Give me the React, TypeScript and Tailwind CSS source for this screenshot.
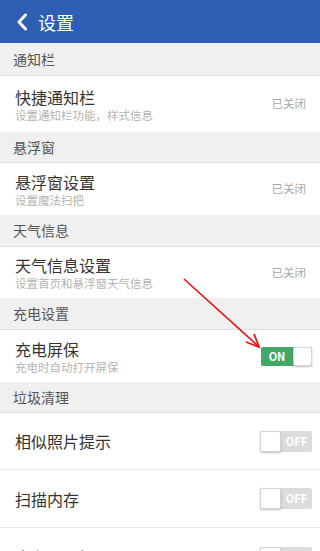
import React from "react";

type Row = {
  title: string;
  subtitle?: string;
  status?: string;
  toggle?: "on" | "off";
  h: string;
};

type Section = { label: string; h: string; rows: Row[] };

const SECTIONS: Section[] = [
  {
    label: "通知栏",
    h: "h-[33px]",
    rows: [
      { title: "快捷通知栏", subtitle: "设置通知栏功能，样式信息", status: "已关闭", h: "h-[56px]" },
    ],
  },
  {
    label: "悬浮窗",
    h: "h-[31px]",
    rows: [{ title: "悬浮窗设置", subtitle: "设置魔法扫把", status: "已关闭", h: "h-[52px]" }],
  },
  {
    label: "天气信息",
    h: "h-[32px]",
    rows: [
      { title: "天气信息设置", subtitle: "设置首页和悬浮窗天气信息", status: "已关闭", h: "h-[51px]" },
    ],
  },
  {
    label: "充电设置",
    h: "h-[32px]",
    rows: [{ title: "充电屏保", subtitle: "充电时自动打开屏保", toggle: "on", h: "h-[52px]" }],
  },
  {
    label: "垃圾清理",
    h: "h-[31px]",
    rows: [
      { title: "相似照片提示", toggle: "off", h: "h-[57px]" },
      { title: "扫描内存", toggle: "off", h: "h-[58px]" },
      { title: "内存不足提醒", toggle: "off", h: "h-[58px]" },
    ],
  },
];

function Toggle({ on }: { on: boolean }) {
  if (on) {
    return (
      <div className="flex h-[19px] w-[51px] rounded-[2px] bg-[#43a865]">
        <div className="flex w-[32px] items-center justify-center text-[11px] font-bold text-white">ON</div>
        <div className="w-[19px] rounded-[2px] border border-[#d8d8d8] bg-white shadow-[0_1px_2px_rgba(0,0,0,0.25)]" />
      </div>
    );
  }
  return (
    <div className="flex h-[21px] w-[52px] rounded-[2px] bg-[#dcdcdc]">
      <div className="w-[21px] rounded-[2px] border border-[#d4d4d4] bg-white shadow-[0_1px_2px_rgba(0,0,0,0.25)]" />
      <div className="flex flex-1 items-center justify-center text-[11px] font-bold text-white">OFF</div>
    </div>
  );
}

export default function App() {
  return (
    <div
      className="relative h-[551px] w-[320px] overflow-hidden bg-white"
      style={{ fontFamily: '"Noto Sans CJK SC", "Noto Sans", sans-serif' }}
    >
      <div className="flex h-[43px] items-center gap-[10px] bg-[#2e5fb3] pl-[16px]">
        <svg width="12" height="18" viewBox="0 0 12 18">
          <path d="M9.5 2 L3 9 L9.5 16" fill="none" stroke="#fff" strokeWidth="3" strokeLinecap="round" strokeLinejoin="round" />
        </svg>
        <span className="text-[18px] leading-none text-white">设置</span>
      </div>

      {SECTIONS.map((section) => (
        <div key={section.label}>
          <div
            className={`flex ${section.h} items-center border-b border-[#dedede] bg-[#f0f0f0] pl-[13px] text-[14px] text-[#555]`}
          >
            {section.label}
          </div>
          {section.rows.map((row, i) => (
            <div
              key={row.title}
              className={`flex ${row.h} items-center justify-between pl-[15px] pr-[8px] ${
                i < section.rows.length - 1 ? "border-b border-[#e6e6e6]" : ""
              }`}
            >
              <div className="flex flex-col">
                <span className="text-[16px] leading-[20px] text-[#333]">{row.title}</span>
                {row.subtitle && (
                  <span className="mt-[1px] text-[11.5px] leading-[14px] text-[#b4b4b4]">{row.subtitle}</span>
                )}
              </div>
              {row.status && <span className="mr-[6px] text-[11.5px] text-[#a8a8a8]">{row.status}</span>}
              {row.toggle && <Toggle on={row.toggle === "on"} />}
            </div>
          ))}
        </div>
      ))}

      <svg className="pointer-events-none absolute left-0 top-0" width="320" height="551">
        <line x1="184" y1="279" x2="258" y2="346" stroke="#f01010" strokeWidth="1.6" />
        <path d="M246 342 L259 347 L254 334" fill="none" stroke="#f01010" strokeWidth="1.8" strokeLinejoin="miter" />
      </svg>
    </div>
  );
}
